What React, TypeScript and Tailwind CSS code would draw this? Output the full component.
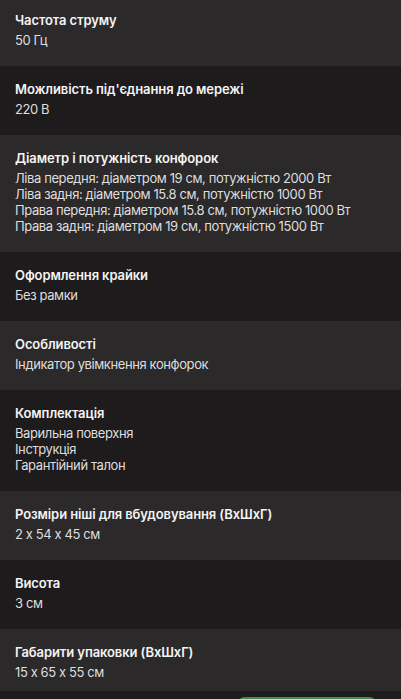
const SPECS = [
  { title: "Частота струму", lines: ["50 Гц"] },
  { title: "Можливість під'єднання до мережі", lines: ["220 В"] },
  {
    title: "Діаметр і потужність конфорок",
    lines: [
      "Ліва передня: діаметром 19 см, потужністю 2000 Вт",
      "Ліва задня: діаметром 15.8 см, потужністю 1000 Вт",
      "Права передня: діаметром 15.8 см, потужністю 1000 Вт",
      "Права задня: діаметром 19 см, потужністю 1500 Вт",
    ],
  },
  { title: "Оформлення крайки", lines: ["Без рамки"] },
  { title: "Особливості", lines: ["Індикатор увімкнення конфорок"] },
  { title: "Комплектація", lines: ["Варильна поверхня", "Інструкція", "Гарантійний талон"] },
  { title: "Розміри ніші для вбудовування (ВхШхГ)", lines: ["2 x 54 x 45 см"] },
  { title: "Висота", lines: ["3 см"] },
  { title: "Габарити упаковки (ВхШхГ)", lines: ["15 x 65 x 55 см"] },
];

export default function App() {
  return (
    <div className="min-h-screen bg-[#1e1b1c] font-['Inter',sans-serif] [font-feature-settings:'calt'_0] overflow-hidden">
      <div className="-mt-[3px]">
        {SPECS.map((spec, i) => (
          <div
            key={spec.title}
            className={`px-[15px] pt-[13px] pb-[18px] ${i % 2 === 0 ? "bg-[#2b292a]" : "bg-[#1e1b1c]"}`}
          >
            <h3 className="text-[13px] leading-5 font-semibold tracking-[-0.1px] text-[#f4f4f4]">
              {spec.title}
            </h3>
            <div className="mt-[2px]">
              {spec.lines.map((line) => (
                <p key={line} className="text-[13px] leading-4 tracking-[-0.4px] text-[#dedede]">
                  {line}
                </p>
              ))}
            </div>
          </div>
        ))}
      </div>

      <div className="fixed left-0 right-0 top-[691px] h-16 bg-[#1e1b1c]">
        <button className="mt-[6px] ml-[237px] w-[140px] h-10 rounded-lg bg-[#3e8e4e]" />
      </div>
    </div>
  );
}
